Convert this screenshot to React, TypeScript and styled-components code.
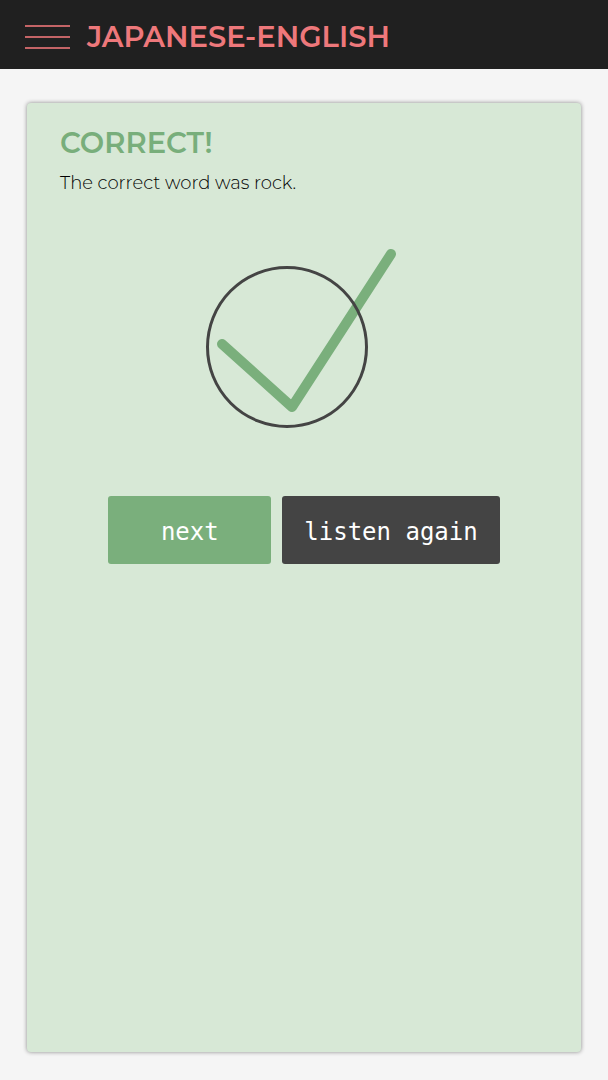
import React from "react";
import styled, { createGlobalStyle } from "styled-components";

const GlobalStyle = createGlobalStyle`
  *, *::before, *::after { box-sizing: border-box; }
  body {
    margin: 0;
    background: #f5f5f5;
    color: #202020;
    font-family: Montserrat, Inter, "Liberation Sans", sans-serif;
  }
`;

const Page = styled.div`
  display: flex;
  flex-direction: column;
  min-height: 100vh;
`;

const Header = styled.header`
  display: flex;
  align-items: center;
  gap: 17px;
  padding: 19px 25px 14px;
  background: #202020;
`;

const MenuButton = styled.button`
  display: flex;
  flex-direction: column;
  gap: 9px;
  width: 45px;
  padding: 5px 0;
  border: 0;
  background: none;
  cursor: pointer;
`;

const MenuBar = styled.span`
  height: 2px;
  width: 100%;
  background: #c46466;
`;

const Title = styled.h1`
  margin: 0;
  color: #ee787b;
  font-size: 29px;
  font-weight: 600;
  line-height: 36px;
  text-transform: uppercase;
`;

const Card = styled.main`
  display: flex;
  flex: 1;
  flex-direction: column;
  margin: 34px 27px 28px;
  padding: 22px 33px;
  border-radius: 4px;
  background: #d7e8d6;
  box-shadow: 0 0 4px #888;
`;

const Heading = styled.h2`
  margin: 0;
  color: #78ae7b;
  font-size: 29px;
  font-weight: 600;
  line-height: 36px;
  text-transform: uppercase;
`;

const Message = styled.p`
  margin: 10px 0 0;
  color: #000;
  font-size: 18px;
  font-weight: 300;
  line-height: 24px;
`;

const Mark = styled.svg`
  display: block;
  align-self: center;
  width: 196px;
  height: 184px;
  margin-top: 50px;
`;

const Actions = styled.div`
  display: flex;
  flex-wrap: wrap;
  justify-content: center;
  gap: 11px;
  margin-top: 67px;
`;

const Button = styled.button<{ $primary?: boolean }>`
  min-width: 163px;
  height: 68px;
  padding: 4px 22px 0;
  border: 0;
  border-radius: 3px;
  background: ${({ $primary }) => ($primary ? "#7aaf7c" : "#444")};
  color: #fff;
  font-family: "DejaVu Sans Mono", monospace;
  font-size: 24px;
  line-height: 28px;
  cursor: pointer;
`;

export default function App() {
  return (
    <Page>
      <GlobalStyle />
      <Header>
        <MenuButton type="button" aria-label="Menu">
          <MenuBar />
          <MenuBar />
          <MenuBar />
        </MenuButton>
        <Title>Japanese-English</Title>
      </Header>
      <Card>
        <Heading>Correct!</Heading>
        <Message>The correct word was rock.</Message>
        <Mark viewBox="0 0 196 184" aria-hidden="true">
          <path
            d="M16 99 L86 162 L185 9"
            fill="none"
            stroke="#7aaf7c"
            strokeWidth="10"
            strokeLinecap="round"
            strokeLinejoin="round"
          />
          <circle cx="81" cy="102" r="79.5" fill="none" stroke="#444" strokeWidth="3" />
        </Mark>
        <Actions>
          <Button type="button" $primary>
            next
          </Button>
          <Button type="button">listen again</Button>
        </Actions>
      </Card>
    </Page>
  );
}
